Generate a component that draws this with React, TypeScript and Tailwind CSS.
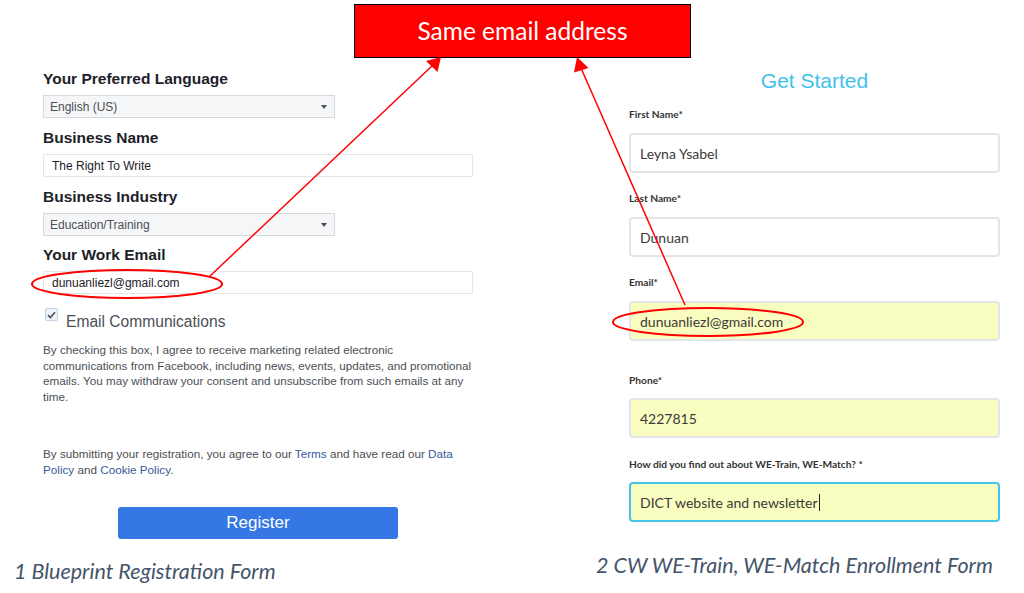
import React from "react";

const arial = { fontFamily: '"Liberation Sans", Arial, sans-serif' };
const lato = { fontFamily: 'Lato, "Noto Sans", sans-serif' };

function Caret() {
  return (
    <svg width="8" height="6" viewBox="0 0 8 6" className="mr-[6px]">
      <path d="M1 1 L7 1 L4 5 Z" fill="#4b4f56" />
    </svg>
  );
}

function FbSelect({ value }: { value: string }) {
  return (
    <div className="flex h-[23px] w-[292px] items-center justify-between border border-[#d6d9de] bg-[#f5f6f7] pl-[6px] text-[12px] text-[#4b4f56]">
      <span>{value}</span>
      <Caret />
    </div>
  );
}

function FbInput({ value }: { value: string }) {
  return (
    <div className="flex h-[23px] w-[430px] items-center border border-[#e4e6ea] bg-white pl-[8px] text-[12px] text-[#1d2129]">
      {value}
    </div>
  );
}

function FbLabel({ children, mt }: { children: React.ReactNode; mt: string }) {
  return <div className={`${mt} h-[20px] text-[15.5px] font-bold leading-[20px] text-[#1d2129]`}>{children}</div>;
}

function CwLabel({ children, mt }: { children: React.ReactNode; mt: string }) {
  return <div className={`${mt} h-[12px] text-[10.2px] font-bold leading-[12px] text-[#333]`}>{children}</div>;
}

function CwInput({ children, mt, yellow, focus }: { children: React.ReactNode; mt: string; yellow?: boolean; focus?: boolean }) {
  const base = "flex h-[40px] w-[371px] items-center rounded-[4px] pl-[9px] text-[14px] text-[#3a3a3a]";
  const bg = yellow ? "bg-[#fafdc0]" : "bg-white";
  const border = focus ? "border-2 border-[#45c4ea]" : "border-2 border-[#e3e5e8]";
  return <div className={`${mt} ${base} ${bg} ${border}`}>{children}</div>;
}

export default function App() {
  return (
    <div className="relative h-[593px] w-[1024px] overflow-hidden bg-white">
      {/* Banner */}
      <div className="pl-[354px] pt-[4px]">
        <div
          className="flex h-[54px] w-[337px] items-center justify-center border border-black bg-[#ff0000] text-[24.5px] text-white"
          style={lato}
        >
          Same email address
        </div>
      </div>

      <div className="flex">
        {/* Left: Blueprint */}
        <div className="w-[590px]">
          <div className="pl-[43px]" style={arial}>
            <FbLabel mt="mt-[11px]">Your Preferred Language</FbLabel>
            <div className="mt-[6px]">
              <FbSelect value="English (US)" />
            </div>
            <FbLabel mt="mt-[10px]">Business Name</FbLabel>
            <div className="mt-[6px]">
              <FbInput value="The Right To Write" />
            </div>
            <FbLabel mt="mt-[10px]">Business Industry</FbLabel>
            <div className="mt-[6px]">
              <FbSelect value="Education/Training" />
            </div>
            <FbLabel mt="mt-[9px]">Your Work Email</FbLabel>
            <div className="mt-[6px]">
              <FbInput value="dunuanliezl@gmail.com" />
            </div>

            <div className="mt-[14px] flex items-start">
              <div className="ml-[2px] flex h-[13px] w-[13px] items-center justify-center rounded-[2px] border border-[#bfd3ea] bg-[#eef3f9]">
                <svg width="9" height="8" viewBox="0 0 9 8">
                  <path d="M1 4.2 L3.4 6.5 L8 1.2" fill="none" stroke="#4b4f56" strokeWidth="1.6" />
                </svg>
              </div>
              <span className="ml-[8px] mt-[4px] text-[15.6px] leading-[20px] text-[#4b4f56]">Email Communications</span>
            </div>

            <p className="mt-[10px] w-[440px] text-[11.7px] leading-[15.5px] text-[#4b4f56]">
              By checking this box, I agree to receive marketing related electronic
              <br />
              communications from Facebook, including news, events, updates, and promotional
              <br />
              emails. You may withdraw your consent and unsubscribe from such emails at any
              <br />
              time.
            </p>

            <p className="mt-[42px] w-[440px] text-[11.7px] leading-[15.5px] text-[#4b4f56]">
              By submitting your registration, you agree to our <span className="text-[#365899]">Terms</span> and have
              read our <span className="text-[#365899]">Data</span>
              <br />
              <span className="text-[#365899]">Policy</span> and <span className="text-[#365899]">Cookie Policy</span>.
            </p>

            <div className="ml-[75px] mt-[30px] flex h-[32px] w-[280px] items-center justify-center rounded-[3px] bg-[#3578e5] text-[17px] text-white">
              Register
            </div>
          </div>
          <div className="mt-[20px] pl-[14px] text-[21.5px] italic leading-[24px] text-[#44546a]" style={lato}>
            1 Blueprint Registration Form
          </div>
        </div>

        {/* Right: CW WE-Train */}
        <div className="w-[434px]">
          <div className="pl-[39px]" style={lato}>
            <div className="mt-[11px] w-[371px] text-center text-[21px] leading-[24px] text-[#41c1ec]" style={arial}>
              Get Started
            </div>
            <CwLabel mt="mt-[15px]">First Name*</CwLabel>
            <CwInput mt="mt-[13px]">Leyna Ysabel</CwInput>
            <CwLabel mt="mt-[19px]">Last Name*</CwLabel>
            <CwInput mt="mt-[13px]">Dunuan</CwInput>
            <CwLabel mt="mt-[19px]">Email*</CwLabel>
            <CwInput mt="mt-[13px]" yellow>
              dunuanliezl@gmail.com
            </CwInput>
            <CwLabel mt="mt-[33px]">Phone*</CwLabel>
            <CwInput mt="mt-[12px]" yellow>
              4227815
            </CwInput>
            <CwLabel mt="mt-[20px]">How did you find out about WE-Train, WE-Match? *</CwLabel>
            <CwInput mt="mt-[12px]" yellow focus>
              DICT website and newsletter
              <span className="ml-[1px] inline-block h-[17px] w-px bg-[#222]" />
            </CwInput>
          </div>
          <div className="mt-[31px] pl-[6px] text-[21.5px] italic leading-[24px] text-[#44546a]" style={lato}>
            2 CW WE-Train, WE-Match Enrollment Form
          </div>
        </div>
      </div>

      {/* Annotation overlay: arrows and ellipses */}
      <svg className="pointer-events-none absolute left-0 top-0" width="1024" height="593" viewBox="0 0 1024 593">
        <line x1="209" y1="277" x2="433" y2="65" stroke="#ff0000" strokeWidth="1.5" />
        <polygon points="441,57 437.5,72 426,61" fill="#ff0000" />
        <line x1="685" y1="305" x2="581" y2="68" stroke="#ff0000" strokeWidth="1.5" />
        <polygon points="577,57 588.5,68 574,72.5" fill="#ff0000" />
        <ellipse cx="127" cy="284" rx="95" ry="14" fill="none" stroke="#ff0000" strokeWidth="2" />
        <ellipse cx="708" cy="322" rx="95" ry="14" fill="none" stroke="#ff0000" strokeWidth="2" />
      </svg>
    </div>
  );
}
